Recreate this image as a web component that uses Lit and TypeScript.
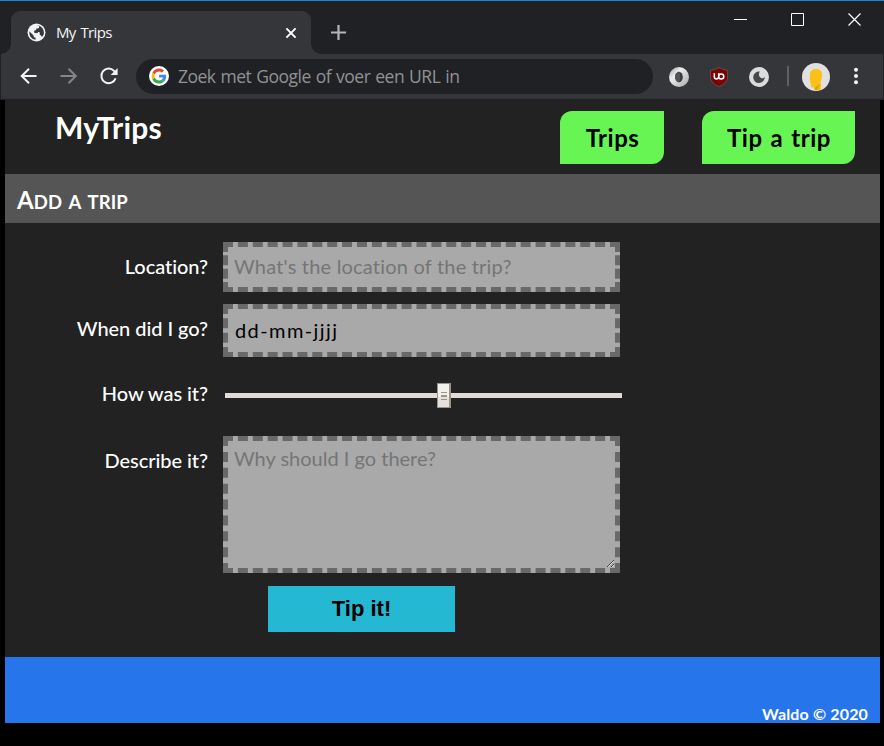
import { LitElement, html, css } from "lit";
import { customElement } from "lit/decorators.js";

@customElement("browser-chrome")
class BrowserChrome extends LitElement {
  static styles = css`
    :host { display: block; height: 100px; box-sizing: border-box; border-top: 1px solid #1883d7; background: #202124; font-family: "Open Sans", "Noto Sans", sans-serif; }
    svg { display: block; flex: none; }
    .strip { display: flex; height: 53px; padding-left: 1px; }
    .tab { position: relative; box-sizing: border-box; display: flex; align-items: center; width: 300px; height: 43px; margin: 10px 0 0 10px; padding: 0 13px 0 16px; background: #35363a; border-radius: 9px 9px 0 0; color: #f4f5f6; font-size: 15px; }
    .tab::before, .tab::after { content: ""; position: absolute; bottom: 0; width: 10px; height: 10px; }
    .tab::before { left: -10px; background: radial-gradient(circle at 0 0, transparent 9.5px, #35363a 10px); }
    .tab::after { right: -10px; background: radial-gradient(circle at 100% 0, transparent 9.5px, #35363a 10px); }
    .title { flex: 1; margin: 0 0 1px 10px; letter-spacing: -0.65px; word-spacing: 1.5px; }
    .plus { margin: 23px 0 0 20px; }
    .window { display: flex; gap: 42px; margin: 11px 22px 0 auto; }
    .bar { display: flex; align-items: center; height: 45px; box-sizing: border-box; background: #35363a; border-bottom: 1px solid #313235; margin: 0 1px; padding-left: 18px; }
    .nav { display: flex; gap: 20px; }
    .omni { box-sizing: border-box; display: flex; align-items: center; gap: 9px; width: 517px; height: 35px; margin-left: 17px; padding-left: 13px; border-radius: 18px; background: #202124; color: #919295; font-size: 17.5px; letter-spacing: -0.5px; word-spacing: .9px; white-space: nowrap; }
    .ext { display: flex; gap: 20px; margin: 1px 0 0 16px; }
    .sep { width: 2px; height: 20px; margin: 0 13px 0 18px; background: #5f6064; }
    .avatar { margin-top: 1px; }
    .dots { margin-left: 14px; }
  `;
  render() {
    return html`
      <div class="strip">
        <div class="tab">
          <svg width="19" height="19" viewBox="0 0 19 19"><circle cx="9.5" cy="9.5" r="9" fill="#f1f3f4"/><path d="M9.8 2.2A7.4 7.4 0 0 1 16.6 11.6Q16 13.5 14.9 14L14.2 12.6Q13.8 12 12.8 12V10Q12.8 9.1 11.9 9.1H7.4V7.3H9.2V5.6H11Q12.2 5.4 12.2 4V3.2L9.8 2.2Z" fill="#35363a"/><path d="M2.2 8.2 6.6 12.4V13.2Q6.6 14.4 8.6 14.8V16.8Q2.2 16 2.2 8.2Z" fill="#35363a"/><path d="M7.4 9.1H10.8" stroke="#35363a" stroke-width="2"/></svg>
          <span class="title">My Trips</span>
          <svg width="14" height="14" viewBox="0 0 14 14" stroke="#fff" stroke-width="2"><path d="M2.4 2.4 11.6 11.6M11.6 2.4 2.4 11.6"/></svg>
        </div>
        <svg class="plus" width="16" height="16" viewBox="0 0 16 16" stroke="#b4b6b9" stroke-width="2.2"><path d="M7.5 1V16M0 8.5H15"/></svg>
        <div class="window">
          <svg width="15" height="15" viewBox="0 0 15 15" stroke="#fff"><path d="M1 7.5H14"/></svg>
          <svg width="15" height="15" viewBox="0 0 15 15" fill="none" stroke="#fff"><path d="M1.5 1.5H13.5V13.5H1.5Z"/></svg>
          <svg width="15" height="15" viewBox="0 0 15 15" stroke="#fff" stroke-width="1.2"><path d="M1.5 1.5 13.5 13.5M13.5 1.5 1.5 13.5"/></svg>
        </div>
      </div>
      <div class="bar">
        <div class="nav">
          <svg width="20" height="20" viewBox="0 0 20 20" fill="none" stroke="#f1f3f4" stroke-width="2"><path d="M17.5 10H3M10 2.7 2.7 10 10 17.3"/></svg>
          <svg width="20" height="20" viewBox="0 0 20 20" fill="none" stroke="#85868a" stroke-width="2"><path d="M1.5 10H16.5M9.5 2.7 16.8 10 9.5 17.3"/></svg>
          <svg width="20" height="20" viewBox="0 0 20 20" fill="none"><path d="M16.6 12.2A7.3 7.3 0 1 1 15 4.9L17 7" stroke="#f1f3f4" stroke-width="2"/><path d="M18.6 2V9H11.6Z" fill="#f1f3f4"/></svg>
        </div>
        <div class="omni">
          <svg width="20" height="20" viewBox="0 0 20 20"><circle cx="10" cy="10" r="10" fill="#fff"/><g transform="translate(2.6 2.6) scale(.31)"><path fill="#EA4335" d="M24 9.5c3.54 0 6.71 1.22 9.21 3.6l6.85-6.85C35.9 2.38 30.47 0 24 0 14.62 0 6.51 5.38 2.56 13.22l7.98 6.19C12.43 13.72 17.74 9.5 24 9.5z"/><path fill="#4285F4" d="M46.98 24.55c0-1.57-.15-3.09-.38-4.55H24v9.02h12.94c-.58 2.96-2.26 5.48-4.78 7.18l7.73 6c4.51-4.18 7.09-10.36 7.09-17.65z"/><path fill="#FBBC05" d="M10.53 28.59a14.5 14.5 0 0 1 0-9.18l-7.98-6.19a24 24 0 0 0 0 21.56z"/><path fill="#34A853" d="M24 48c6.48 0 11.93-2.13 15.89-5.81l-7.73-6c-2.15 1.45-4.92 2.3-8.16 2.3-6.26 0-11.57-4.22-13.47-9.91l-7.98 6.19C6.51 42.62 14.62 48 24 48z"/></g></svg>
          <span>Zoek met Google of voer een URL in</span>
        </div>
        <div class="ext">
          <svg width="20" height="20" viewBox="0 0 20 20"><defs><linearGradient id="ring" x1="0" y1="0" x2="1" y2="1"><stop offset="0" stop-color="#9a9a9a"/><stop offset=".35" stop-color="#eee"/><stop offset=".65" stop-color="#ccc"/><stop offset="1" stop-color="#aaa"/></linearGradient></defs><circle cx="10" cy="10" r="10" fill="url(#ring)"/><ellipse cx="10" cy="10" rx="3.8" ry="5.3" fill="#3a3b3d"/><path d="M10 4.5Q12.5 9 10 15.5Q6 14 6 10Q6 6 10 4.5" fill="#55565a"/></svg>
          <svg width="20" height="20" viewBox="0 0 20 20"><path d="M10 .5Q13 2.7 18.5 3.3V10Q18.5 16 10 19.7Q1.5 16 1.5 10V3.3Q7 2.7 10 .5Z" fill="#800000" stroke="#60585a" stroke-width=".8"/><path d="M5.3 6.3V9.5Q5.3 12 7.6 12Q9.5 12 9.7 9.3Q9.8 7 12.2 7Q14.8 7 14.8 9.5Q14.8 12 12.2 12Q9.7 12 9.7 9.5V6.3" fill="none" stroke="#fff" stroke-width="1.5"/></svg>
          <svg width="20" height="20" viewBox="0 0 20 20"><circle cx="10" cy="10" r="10" fill="#dcdcdc"/><path d="M10.8 4.5A5.8 5.8 0 1 0 15.8 10Q13.8 12 11.6 10.7Q8.6 8.5 10.8 4.5Z" fill="#47484a"/></svg>
        </div>
        <div class="sep"></div>
        <svg class="avatar" width="28" height="28" viewBox="0 0 28 28"><circle cx="14" cy="14" r="14" fill="#e0e0e0"/><path d="M8 11Q8.6 6 14 6Q20 6 20 11.5Q20 16 18.6 19L19.3 27H12.5V24.5H9.8Q8.8 24 9 21.5L7.8 18Z" fill="#fbc116"/><path d="M17.8 20.5Q16 23 12.5 24.5L12.8 27H15Q17.5 25 17.8 20.5Z" fill="#e0a30d"/></svg>
        <svg class="dots" width="24" height="20" viewBox="0 0 24 20" fill="#f1f3f4"><circle cx="12" cy="3.7" r="2"/><circle cx="12" cy="10" r="2"/><circle cx="12" cy="16.3" r="2"/></svg>
      </div>`;
  }
}

@customElement("app-root")
class AppRoot extends LitElement {
  static styles = css`
    :host { display: block; width: 884px; height: 746px; overflow: hidden; background: #000; font-family: Lato, "Open Sans", sans-serif; font-variant-ligatures: none; color: #fff; }
    .page { margin: 0 4px 0 5px; height: 557px; background: #222; display: flex; flex-direction: column; }
    header { display: flex; height: 74px; box-sizing: border-box; padding: 10px 25px 0 50px; align-items: flex-start; }
    h1 { margin: 0 auto 0 0; font-size: 30px; line-height: 34px; font-weight: 700; letter-spacing: .2px; }
    nav { display: flex; gap: 38px; margin-top: 1px; }
    nav a { height: 53px; line-height: 54px; text-align: center; background: #66f553; color: #000; border-radius: 12px 0; font-size: 24px; font-weight: 700; letter-spacing: .5px; word-spacing: 1.7px; text-indent: 1px; }
    .trips { width: 104px; }
    .tip { width: 153px; }
    h2 { margin: 0; height: 49px; box-sizing: border-box; padding: 1px 12px 0; line-height: 49px; background: #555; font-size: 18.5px; text-transform: uppercase; font-weight: 700; letter-spacing: .1px; word-spacing: 2.5px; }
    h2::first-letter { font-size: 24px; }
    form { flex: 1; display: grid; grid-template-columns: 203px 397px; grid-template-rows: 62px 53px 79px 150px 46px; column-gap: 15px; padding-top: 19px; align-content: start; font-size: 20px; }
    label { text-align: right; line-height: 24px; padding-top: 12px; font-weight: 500; white-space: nowrap; letter-spacing: -.05px; }
    .box { box-sizing: border-box; display: block; width: 397px; margin: 0; border: 5px dashed #696969; border-radius: 0; background: #a9a9a9; color: #000; font: 20px Lato, sans-serif; font-variant-ligatures: none; outline: none; padding: 0 6px; }
    .box::placeholder { color: #757575; opacity: 1; }
    .loc { height: 50px; padding-bottom: 2px; letter-spacing: .2px; }
    .date { height: 53px; line-height: 43px; padding-left: 7px; letter-spacing: 1.4px; }
    .desc { height: 137px; line-height: 24px; padding-top: 5px; }
    .late { padding-top: 24px; }
    .slider { display: flex; align-items: center; justify-content: center; height: 5px; width: 397px; margin: 36px 0 0 2px; background: #e1dbd5; }
    .thumb { box-sizing: border-box; flex: none; width: 14px; height: 25px; margin-left: 41px; border: 1px solid #9a9389; border-right-width: 2px; background: linear-gradient(#f3f1ee 55%, #e6e1dc 55%); display: flex; flex-direction: column; align-items: center; justify-content: center; gap: 2px; }
    .thumb i { width: 6px; height: 1px; background: #9a9389; }
    .thumb i:nth-child(2) { height: 2px; }
    button { grid-column: 2; width: 187px; height: 46px; margin-left: 45px; border: 0; padding: 0; background: #25b8d3; color: #000; font: 700 22px "Liberation Sans", Arial, sans-serif; }
    footer { height: 66px; margin: 0 4px 0 5px; box-sizing: border-box; padding: 48px 12px 0; background: #2775ea; text-align: right; font-size: 16px; line-height: 18px; font-weight: 700; letter-spacing: .15px; }
  `;
  render() {
    return html`
      <browser-chrome></browser-chrome>
      <div class="page">
        <header><h1>MyTrips</h1><nav><a class="trips">Trips</a><a class="tip">Tip a trip</a></nav></header>
        <h2>Add a trip</h2>
        <form>
          <label>Location?</label><input class="box loc" placeholder="What's the location of the trip?">
          <label>When did I go?</label><div class="box date">dd-mm-jjjj</div>
          <label class="late">How was it?</label><div class="slider"><div class="thumb"><i></i><i></i><i></i></div></div>
          <label>Describe it?</label><textarea class="box desc" placeholder="Why should I go there?"></textarea>
          <button type="button">Tip it!</button>
        </form>
      </div>
      <footer>Waldo © 2020</footer>`;
  }
}
